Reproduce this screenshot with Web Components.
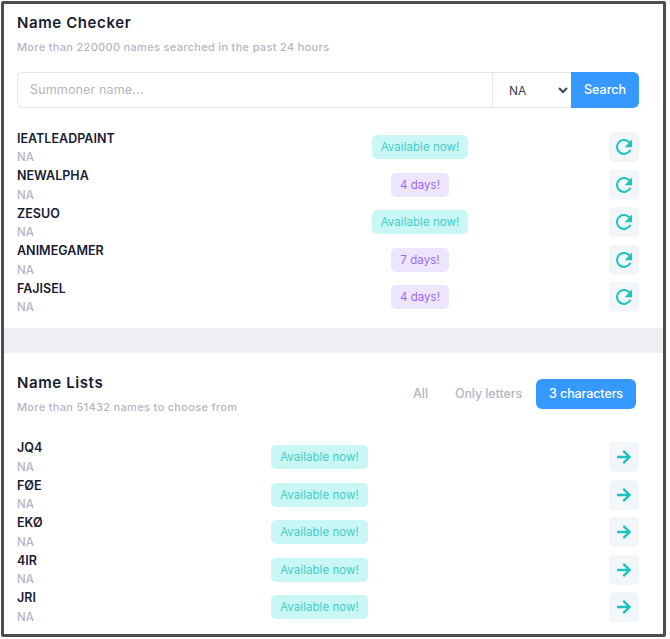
<!DOCTYPE html>
<html>
<head>
<meta charset="utf-8">
<title>Name Checker</title>
<style>
  html, body { margin: 0; padding: 0; background: #fff; }
  body { font-family: Inter, "Liberation Sans", sans-serif; color: #181c32; }
</style>
</head>
<body>
<app-frame>
  <name-panel heading="Name Checker" sub="More than 220000 names searched in the past 24 hours" style="--head-top:9px;--list-gap:20.5px;--head-gap:16px;--bottom:11.5px">
    <search-form slot="tools"></search-form>
    <name-row style="--cols:283px 240px 1fr" region="NA" status="Available now!" action="redo">IEATLEADPAINT</name-row>
    <name-row style="--cols:283px 240px 1fr" region="NA" status="4 days!" tone="info" action="redo">NEWALPHA</name-row>
    <name-row style="--cols:283px 240px 1fr" region="NA" status="Available now!" action="redo">ZESUO</name-row>
    <name-row style="--cols:283px 240px 1fr" region="NA" status="7 days!" tone="info" action="redo">ANIMEGAMER</name-row>
    <name-row style="--cols:283px 240px 1fr" region="NA" status="4 days!" tone="info" action="redo">FAJISEL</name-row>
  </name-panel>
  <band-gap></band-gap>
  <name-panel heading="Name Lists" sub="More than 51432 names to choose from" style="--head-top:20px;--list-gap:22.75px;--head-gap:0px;--bottom:8px">
    <tab-bar slot="actions"></tab-bar>
    <name-row style="--cols:183px 239px 1fr" region="NA" status="Available now!" action="go">JQ4</name-row>
    <name-row style="--cols:183px 239px 1fr" region="NA" status="Available now!" action="go">FØE</name-row>
    <name-row style="--cols:183px 239px 1fr" region="NA" status="Available now!" action="go">EKØ</name-row>
    <name-row style="--cols:183px 239px 1fr" region="NA" status="Available now!" action="go">4IR</name-row>
    <name-row style="--cols:183px 239px 1fr" region="NA" status="Available now!" action="go">JRI</name-row>
  </name-panel>
</app-frame>

<script>
class AppFrame extends HTMLElement {
  constructor() {
    super();
    this.attachShadow({ mode: "open" });
    this.shadowRoot.innerHTML = `
      <style>
        :host {
          display: block;
          box-sizing: border-box;
          width: 665px;
          height: 636px;
          margin: 1px 0 0 1px;
          border: 3px solid #4d4d4d;
          border-radius: 2px;
          overflow: hidden;
          background: #fff;
        }
      </style>
      <slot></slot>`;
  }
}

class BandGap extends HTMLElement {
  constructor() {
    super();
    this.attachShadow({ mode: "open" });
    this.shadowRoot.innerHTML = `
      <style>
        :host { display: block; height: 25px; background: #eeeef3; }
      </style>`;
  }
}

class NamePanel extends HTMLElement {
  constructor() {
    super();
    this.attachShadow({ mode: "open" });
    this.shadowRoot.innerHTML = `
      <style>
        :host {
          display: block;
          padding: var(--head-top) 24px var(--bottom) 13px;
        }
        .head { display: flex; justify-content: space-between; align-items: center; padding-right: 3px; }
        .title {
          font-size: 15px;
          line-height: 20px;
          font-weight: 600;
          color: #181c32;
          letter-spacing: 0.6px;
        }
        .sub {
          margin-top: 5px;
          font-size: 11px;
          line-height: 18px;
          font-weight: 500;
          color: #b5b5c3;
          letter-spacing: 0.32px;
        }
        .tools { margin-top: var(--head-gap); }
        .list { margin-top: var(--list-gap); }
      </style>
      <div class="head">
        <div>
          <div class="title"></div>
          <div class="sub"></div>
        </div>
        <slot name="actions"></slot>
      </div>
      <div class="tools"><slot name="tools"></slot></div>
      <div class="list"><slot></slot></div>`;
  }
  connectedCallback() {
    this.shadowRoot.querySelector(".title").textContent = this.getAttribute("heading");
    this.shadowRoot.querySelector(".sub").textContent = this.getAttribute("sub");
  }
}

class SearchForm extends HTMLElement {
  constructor() {
    super();
    this.attachShadow({ mode: "open" });
    this.shadowRoot.innerHTML = `
      <style>
        :host { display: flex; height: 36px; font-size: 12.5px; }
        input, select, button { box-sizing: border-box; height: 36px; margin: 0; font: inherit; }
        input {
          flex: 1;
          min-width: 0;
          padding: 0 12px 2px;
          border: 1px solid #e4e6ef;
          border-right: 0;
          border-radius: 6px 0 0 6px;
          outline: 0;
          letter-spacing: 0.15px;
        }
        input::placeholder { color: #b5b5c3; opacity: 1; }
        select {
          width: 79px;
          padding: 0 0 0 12px;
          border: 1px solid #e4e6ef;
          border-right: 0;
          border-radius: 0;
          background: #fff;
          color: #3f4254;
          font-size: 12px;
          outline: 0;
        }
        button {
          width: 68px;
          padding: 0 0 2px;
          border: 0;
          border-radius: 0 6px 6px 0;
          background: #3699ff;
          color: #fff;
          font-weight: 500;
        }
      </style>
      <input type="text" placeholder="Summoner name...">
      <select><option>NA</option></select>
      <button type="button">Search</button>`;
  }
}

class TabBar extends HTMLElement {
  constructor() {
    super();
    this.attachShadow({ mode: "open" });
    this.shadowRoot.innerHTML = `
      <style>
        :host { display: flex; gap: 1px; font-size: 12.5px; font-weight: 500; color: #b5b5c3; letter-spacing: -0.1px; }
        span { display: block; height: 30px; line-height: 30px; padding: 0 13px; border-radius: 6px; }
        .on { background: #3699ff; color: #fff; }
      </style>
      <span>All</span>
      <span>Only letters</span>
      <span class="on">3 characters</span>`;
  }
}

const ICONS = {
  redo: `<svg viewBox="0 0 16 16" width="16" height="16"><path fill="none" stroke="currentColor" stroke-width="2" stroke-linecap="round" d="M13 3.05A7 7 0 1 0 14 11.6"/><path fill="currentColor" d="M16 .5V8.2H8.6z"/></svg>`,
  go: `<svg viewBox="0 0 448 512" width="14" height="16"><path fill="currentColor" d="M190.5 66.9l22.2-22.2c9.4-9.4 24.6-9.4 33.9 0L441 239c9.4 9.4 9.4 24.6 0 33.9L246.6 467.3c-9.4 9.4-24.6 9.4-33.9 0l-22.2-22.2c-9.5-9.5-9.3-25 .4-34.3L311.4 296H24c-13.3 0-24-10.7-24-24v-32c0-13.3 10.7-24 24-24h287.4L190.9 101.2c-9.8-9.3-10-24.8-.4-34.3z"/></svg>`
};

class NameRow extends HTMLElement {
  constructor() {
    super();
    this.attachShadow({ mode: "open" });
    this.shadowRoot.innerHTML = `
      <style>
        :host {
          display: grid;
          grid-template-columns: var(--cols);
          align-items: center;
          height: 37.5px;
        }
        .name {
          font-size: 12.5px;
          line-height: 19.5px;
          font-weight: 600;
          color: #181c32;
          letter-spacing: 0.02px;
        }
        .region {
          font-size: 11.5px;
          line-height: 18px;
          font-weight: 500;
          color: #b5b5c3;
        }
        .badge {
          justify-self: center;
          height: 24px;
          line-height: 24px;
          padding: 0 9px;
          border-radius: 5px;
          font-size: 11.5px;
          letter-spacing: 0.05px;
          background: #c9f7f5;
          color: #45cdc6;
        }
        .badge.info { background: #eee5ff; color: #9a6afc; }
        .act {
          justify-self: end;
          display: flex;
          align-items: center;
          justify-content: center;
          width: 30px;
          height: 30px;
          border-radius: 5px;
          background: #f3f6f9;
          color: #1bc5bd;
        }
      </style>
      <div>
        <div class="name"><slot></slot></div>
        <div class="region"></div>
      </div>
      <div class="badge"></div>
      <div class="act"></div>`;
  }
  connectedCallback() {
    this.shadowRoot.querySelector(".region").textContent = this.getAttribute("region");
    const badge = this.shadowRoot.querySelector(".badge");
    badge.textContent = this.getAttribute("status");
    if (this.getAttribute("tone") === "info") badge.classList.add("info");
    this.shadowRoot.querySelector(".act").innerHTML = ICONS[this.getAttribute("action")];
  }
}

customElements.define("app-frame", AppFrame);
customElements.define("band-gap", BandGap);
customElements.define("name-panel", NamePanel);
customElements.define("search-form", SearchForm);
customElements.define("tab-bar", TabBar);
customElements.define("name-row", NameRow);
</script>
</body>
</html>
